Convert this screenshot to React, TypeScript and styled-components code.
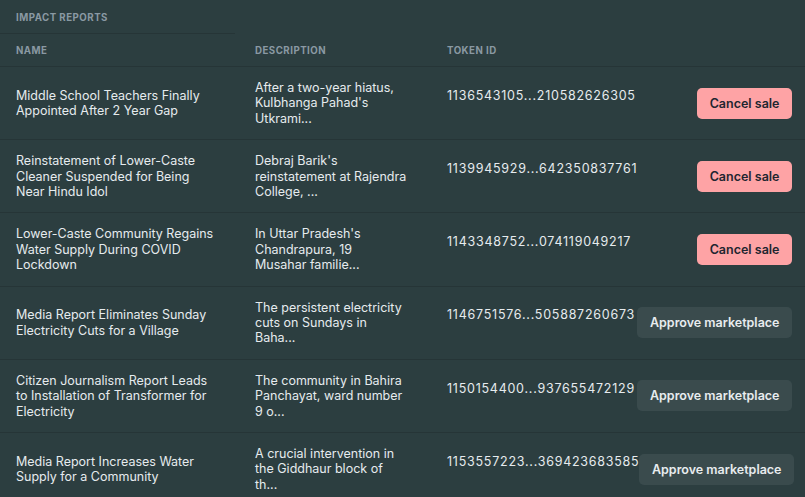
import React from "react";
import styled, { createGlobalStyle } from "styled-components";

const GlobalStyle = createGlobalStyle`
  html, body {
    margin: 0;
    padding: 0;
    background: #2c3e40;
  }
  body {
    font-family: Inter, "Noto Sans", sans-serif;
    color: #e6ebee;
    -webkit-font-smoothing: antialiased;
  }
`;

type Report = {
  name: string;
  description: string;
  token: string;
  listed: boolean;
};

const reports: Report[] = [
  {
    name: "Middle School Teachers Finally Appointed After 2 Year Gap",
    description: "After a two-year hiatus, Kulbhanga Pahad's Utkrami...",
    token: "1136543105...210582626305",
    listed: true,
  },
  {
    name: "Reinstatement of Lower-Caste Cleaner Suspended for Being Near Hindu Idol",
    description: "Debraj Barik's reinstatement at Rajendra College, ...",
    token: "1139945929...642350837761",
    listed: true,
  },
  {
    name: "Lower-Caste Community Regains Water Supply During COVID Lockdown",
    description: "In Uttar Pradesh's Chandrapura, 19 Musahar familie...",
    token: "1143348752...074119049217",
    listed: true,
  },
  {
    name: "Media Report Eliminates Sunday Electricity Cuts for a Village",
    description: "The persistent electricity cuts on Sundays in Baha...",
    token: "1146751576...505887260673",
    listed: false,
  },
  {
    name: "Citizen Journalism Report Leads to Installation of Transformer for Electricity",
    description: "The community in Bahira Panchayat, ward number 9 o...",
    token: "1150154400...937655472129",
    listed: false,
  },
  {
    name: "Media Report Increases Water Supply for a Community",
    description: "A crucial intervention in the Giddhaur block of th...",
    token: "1153557223...369423683585",
    listed: false,
  },
];

const Page = styled.div`
  width: 805px;
  height: 497px;
  overflow: hidden;
  background: #2c3e40;
`;

const Caption = styled.div`
  width: 235px;
  height: 34px;
  box-sizing: border-box;
  padding: 2px 16px 0;
  display: flex;
  align-items: center;
  border-bottom: 1px solid #263537;
  font-size: 9.7px;
  font-weight: 700;
  letter-spacing: 0.05em;
  text-transform: uppercase;
  color: #8a99a3;
`;

const Row = styled.div<{ $header?: boolean }>`
  display: grid;
  grid-template-columns: 239px 192px 1fr auto;
  align-items: center;
  border-bottom: 1px solid #263537;
  min-height: ${(p) => (p.$header ? "32px" : "72.2px")};
`;

const HeadCell = styled.div`
  padding: 8px 16px 7px;
  font-size: 9.7px;
  line-height: 16px;
  font-weight: 700;
  letter-spacing: 0.05em;
  text-transform: uppercase;
  color: #8a99a3;
`;

const Cell = styled.div`
  padding: 13px 16px;
  font-size: 12.5px;
  line-height: 15.33px;
  color: #e6ebee;
`;

const NameCell = styled(Cell)`
  padding-right: 21px;
`;

const DescCell = styled(Cell)`
  padding-right: 24.3px;
`;

const TokenCell = styled(Cell)`
  padding: 0 0 15px 16px;
  letter-spacing: 0.06em;
  white-space: nowrap;
`;

const ActionCell = styled.div`
  display: flex;
  justify-content: flex-end;
  padding-right: 13px;
`;

const Button = styled.button<{ $variant: "cancel" | "approve" }>`
  height: 31px;
  border: none;
  border-radius: 5px;
  padding: 0 12.5px;
  white-space: nowrap;
  font-family: Inter, "Noto Sans", sans-serif;
  font-size: 12.5px;
  font-weight: 600;
  cursor: pointer;
  background: ${(p) => (p.$variant === "cancel" ? "#fea3a5" : "#3a4b4d")};
  color: ${(p) => (p.$variant === "cancel" ? "#1f2630" : "#e8ecef")};
`;

export default function App() {
  return (
    <>
      <GlobalStyle />
      <Page>
        <Caption>Impact Reports</Caption>
        <Row $header>
          <HeadCell>Name</HeadCell>
          <HeadCell>Description</HeadCell>
          <HeadCell>Token ID</HeadCell>
          <HeadCell />
        </Row>
        {reports.map((r) => (
          <Row key={r.token}>
            <NameCell>{r.name}</NameCell>
            <DescCell>{r.description}</DescCell>
            <TokenCell>{r.token}</TokenCell>
            <ActionCell>
              <Button $variant={r.listed ? "cancel" : "approve"}>
                {r.listed ? "Cancel sale" : "Approve marketplace"}
              </Button>
            </ActionCell>
          </Row>
        ))}
      </Page>
    </>
  );
}
